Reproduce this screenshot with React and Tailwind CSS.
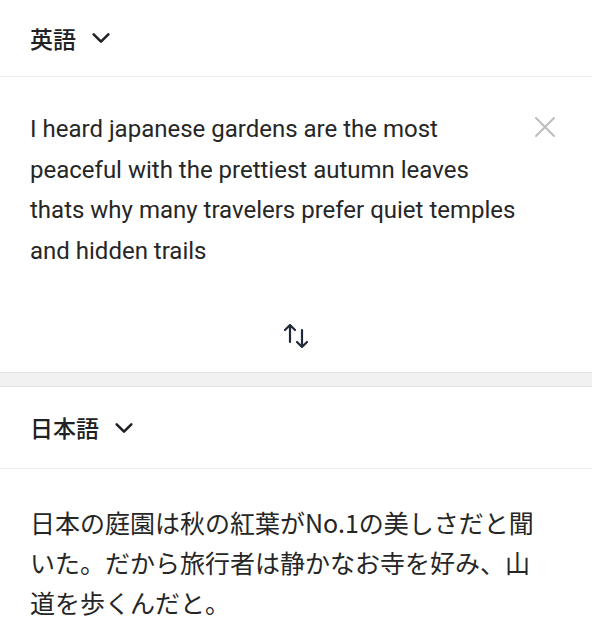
import React from "react";

function Chevron() {
    return (
        <svg width="22" height="22" viewBox="0 0 24 24" fill="none" stroke="#202124" strokeWidth="2.8" strokeLinecap="round" strokeLinejoin="round">
            <path d="M4 8l8 8 8-8" />
        </svg>
    );
}

function SwapIcon() {
    return (
        <svg width="30" height="30" viewBox="0 0 30 30" fill="none" stroke="#1f2a3a" strokeWidth="2.2" strokeLinecap="round" strokeLinejoin="round">
            <path d="M9 4v17M4 9l5-5 5 5" />
            <path d="M21 9v17M16 21l5 5 5-5" />
        </svg>
    );
}

export default function App() {
    return (
        <div className="w-[592px] h-[640px] overflow-hidden bg-white text-[#202124]" style={{ fontFamily: 'Roboto, "Noto Sans CJK JP", sans-serif' }}>
            {/* source language */}
            <div className="h-[77px] flex items-center gap-[14px] pl-[30px] border-b border-[#eeeeee]">
                <span className="text-[23px] font-medium" style={{ fontFamily: '"Noto Sans CJK JP", sans-serif' }}>英語</span>
                <Chevron />
            </div>
            <div className="relative pl-[30px] pr-[72px] pt-[32px] h-[295px]">
                <p className="text-[24px] leading-[40.5px] text-[#262626]">
                    I heard japanese gardens are the most peaceful with the prettiest autumn leaves thats why many travelers prefer quiet temples and hidden trails
                </p>
                <button className="absolute right-[36px] top-[39px]">
                    <svg width="22" height="22" viewBox="0 0 22 22" stroke="#bdbdbd" strokeWidth="2" strokeLinecap="round">
                        <path d="M2 2l18 18M20 2L2 20" />
                    </svg>
                </button>
                <div className="absolute left-0 right-0 top-[244px] flex justify-center">
                    <SwapIcon />
                </div>
            </div>
            <div className="h-[15px] bg-[#f1f1f1] border-y border-[#e2e2e2]" />
            {/* target language */}
            <div className="h-[82px] flex items-center gap-[14px] pl-[30px] border-b border-[#eeeeee]">
                <span className="text-[23px] font-medium" style={{ fontFamily: '"Noto Sans CJK JP", sans-serif' }}>日本語</span>
                <Chevron />
            </div>
            <div className="pl-[30px] pr-[50px] pt-[33px]">
                <p className="text-[25px] leading-[40px] text-[#262626]" style={{ fontFamily: '"Noto Sans CJK JP", sans-serif' }}>
                    日本の庭園は秋の紅葉がNo.1の美しさだと聞いた。だから旅行者は静かなお寺を好み、山道を歩くんだと。
                </p>
            </div>
        </div>
    );
}
